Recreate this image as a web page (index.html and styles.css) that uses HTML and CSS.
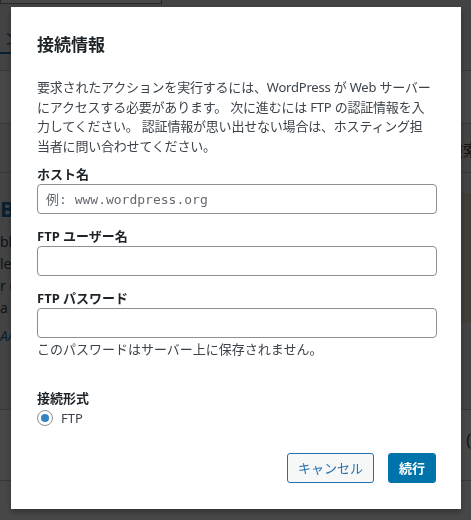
FILE: index.html
```html
<!DOCTYPE html>
<html lang="ja">
<head>
    <meta charset="UTF-8">
    <meta name="viewport" content="width=device-width, initial-scale=1.0">
    <title>接続情報</title>
    <link rel="stylesheet" href="styles.css">
</head>
<body>
    <!-- page behind the dialog -->
    <div class="page">
        <div class="page-top">
            <div class="search-box"></div>
            <div class="tab">ン</div>
        </div>
        <div class="page-row"></div>
        <div class="page-row page-row-search"><span>検索</span></div>
        <div class="page-main">
            <div class="page-text">
                <h2>B</h2>
                <p>bloc</p>
                <p>ler</p>
                <p>r d</p>
                <p>a r</p>
                <p class="link">A/</p>
            </div>
            <div class="page-card"></div>
        </div>
        <div class="page-row page-row-low"><span>(</span></div>
        <div class="page-row"></div>
    </div>

    <div class="backdrop"></div>

    <div class="dialog">
        <h1>接続情報</h1>
        <p class="intro">要求されたアクションを実行するには、WordPress が Web サーバー<br>にアクセスする必要があります。 次に進むには FTP の認証情報を入<br>力してください。 認証情報が思い出せない場合は、ホスティング担<br>当者に問い合わせてください。</p>

        <label class="field-label" for="hostname">ホスト名</label>
        <input type="text" id="hostname" class="field" placeholder="例: www.wordpress.org">

        <label class="field-label field-gap" for="username">FTP ユーザー名</label>
        <input type="text" id="username" class="field">

        <label class="field-label field-gap" for="password">FTP パスワード</label>
        <input type="password" id="password" class="field">
        <p class="note">このパスワードはサーバー上に保存されません。</p>

        <div class="conn-title">接続形式</div>
        <label class="radio-row">
            <span class="radio"><span class="radio-dot"></span></span>
            FTP
        </label>

        <div class="actions">
            <button class="btn btn-cancel">キャンセル</button>
            <button class="btn btn-primary">続行</button>
        </div>
    </div>
</body>
</html>
```

FILE: styles.css
```css
/* General Styles */
body {
    margin: 0;
    padding: 0;
    font-family: "Noto Sans", "Noto Sans CJK JP", sans-serif;
    font-size: 13px;
    background-color: #f0f0f1;
    overflow: hidden;
}

/* page behind the dialog */
.page {
    height: 520px;
    color: #3c434a;
}
.page-top {
    height: 70px;
    border-bottom: 1px solid #c3c4c7;
}
.search-box {
    width: 160px;
    height: 3px;
    border: 1px solid #8c8f94;
    border-top: none;
    background: #fff;
}
.tab {
    width: 20px;
    height: 26px;
    margin-top: 22px;
    border-bottom: 2px solid #2271b1;
    color: #2271b1;
    font-size: 16px;
    line-height: 26px;
    text-align: right;
}
.page-row {
    height: 52px;
    border-bottom: 1px solid #c3c4c7;
    background: #fff;
    text-align: right;
    font-size: 16px;
    line-height: 52px;
}
.page-row-search {
    height: 48px;
    background: #f0f0f1;
}
.page-row-search span {
    margin-right: -8px;
}
.page-main {
    display: flex;
    justify-content: space-between;
    height: 236px;
    border-bottom: 1px solid #c3c4c7;
}
.page-text h2 {
    margin: 20px 0 8px;
    color: #2271b1;
    font-size: 22px;
}
.page-text p {
    margin: 0;
    line-height: 22px;
    font-size: 14px;
}
.page-text .link {
    margin-top: 6px;
    color: #2271b1;
    font-style: italic;
}
.page-card {
    width: 12px;
    height: 130px;
    margin-top: 20px;
    background: #e9dcc4;
}
.page-row-low {
    height: 70px;
    line-height: 60px;
}

.backdrop {
    position: fixed;
    inset: 0;
    background: rgba(0, 0, 0, 0.72);
}

/* dialog */
.dialog {
    position: fixed;
    top: 7px;
    left: 11px;
    width: 450px;
    height: 502px;
    box-sizing: border-box;
    padding: 0 24px 0 26px;
    background: #fff;
    color: #3c434a;
    box-shadow: 0 3px 6px rgba(0, 0, 0, 0.3);
}
.dialog h1 {
    margin: 26px 0 21px;
    font-size: 17px;
    line-height: 24px;
    font-weight: 700;
    color: #1d2327;
}
.intro {
    margin: 0 0 9px;
    line-height: 19.5px;
    letter-spacing: -0.2px;
    white-space: nowrap;
}
.field-label {
    display: block;
    font-weight: 700;
    color: #1d2327;
    line-height: 19px;
}
.field-gap {
    margin-top: 13px;
}
.field {
    display: block;
    width: 100%;
    height: 30px;
    box-sizing: border-box;
    margin: 0;
    padding: 0 8px;
    border: 1px solid #8c8f94;
    border-radius: 4px;
    font-family: "DejaVu Sans Mono", "Noto Sans CJK JP", monospace;
    font-size: 13px;
    color: #2c3338;
}
.field::placeholder {
    color: #646970;
}
.note {
    margin: 2px 0 0;
    line-height: 19.5px;
}
.conn-title {
    margin-top: 28px;
    font-weight: 700;
    color: #1d2327;
    line-height: 20px;
}
.radio-row {
    display: flex;
    align-items: center;
    gap: 8px;
    height: 20px;
    color: #3c434a;
}
.radio {
    display: flex;
    align-items: center;
    justify-content: center;
    width: 16px;
    height: 16px;
    box-sizing: border-box;
    border: 1px solid #8c8f94;
    border-radius: 50%;
    background: #fff;
}
.radio-dot {
    width: 8px;
    height: 8px;
    border-radius: 50%;
    background: #3582c4;
}
.actions {
    display: flex;
    justify-content: flex-end;
    gap: 14px;
    margin-top: 25px;
    padding-right: 1px;
}
.btn {
    height: 30px;
    padding: 0 10px;
    border-radius: 3px;
    font-family: "Noto Sans", "Noto Sans CJK JP", sans-serif;
    font-size: 13px;
    cursor: pointer;
}
.btn-cancel {
    width: 87px;
    background: #f6f7f7;
    border: 1px solid #2271b1;
    color: #2271b1;
}
.btn-primary {
    width: 48px;
    background: #0073aa;
    border: 1px solid #0073aa;
    color: #fff;
    font-weight: 700;
}
```
